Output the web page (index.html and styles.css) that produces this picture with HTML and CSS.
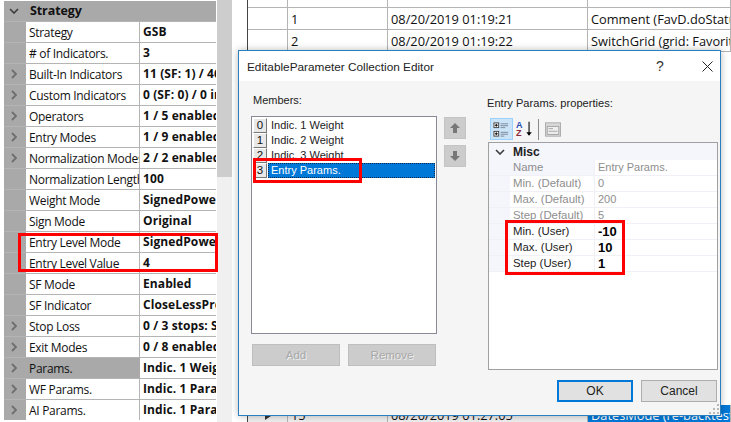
FILE: index.html
```html
<!DOCTYPE html>
<html lang="en">
<head>
<meta charset="utf-8">
<title>EditableParameter Collection Editor</title>
<link rel="stylesheet" href="styles.css">
</head>
<body>
<div class="desktop">
  <aside class="props">
    <div class="props-head"><span class="gutter"><svg class="chev" viewBox="0 0 10 6"><path d="M1 1l4 4 4-4"/></svg></span><b>Strategy</b></div>
    <div class="prow"><span class="gutter"></span><span class="pname">Strategy</span><span class="pval">GSB</span></div>
    <div class="prow"><span class="gutter"></span><span class="pname"># of Indicators.</span><span class="pval">3</span></div>
    <div class="prow"><span class="gutter"><svg class="arr" viewBox="0 0 6 10"><path d="M1 1l4 4-4 4"/></svg></span><span class="pname">Built-In Indicators</span><span class="pval">11 (SF: 1) / 46 indicators</span></div>
    <div class="prow"><span class="gutter"><svg class="arr" viewBox="0 0 6 10"><path d="M1 1l4 4-4 4"/></svg></span><span class="pname">Custom Indicators</span><span class="pval">0 (SF: 0) / 0 indicators</span></div>
    <div class="prow"><span class="gutter"><svg class="arr" viewBox="0 0 6 10"><path d="M1 1l4 4-4 4"/></svg></span><span class="pname">Operators</span><span class="pval">1 / 5 enabled</span></div>
    <div class="prow"><span class="gutter"><svg class="arr" viewBox="0 0 6 10"><path d="M1 1l4 4-4 4"/></svg></span><span class="pname">Entry Modes</span><span class="pval">1 / 9 enabled</span></div>
    <div class="prow"><span class="gutter"><svg class="arr" viewBox="0 0 6 10"><path d="M1 1l4 4-4 4"/></svg></span><span class="pname">Normalization Modes</span><span class="pval">2 / 2 enabled</span></div>
    <div class="prow"><span class="gutter"></span><span class="pname">Normalization Length</span><span class="pval">100</span></div>
    <div class="prow"><span class="gutter"></span><span class="pname">Weight Mode</span><span class="pval">SignedPower</span></div>
    <div class="prow"><span class="gutter"></span><span class="pname">Sign Mode</span><span class="pval">Original</span></div>
    <div class="prow"><span class="gutter"></span><span class="pname">Entry Level Mode</span><span class="pval">SignedPower</span></div>
    <div class="prow"><span class="gutter"></span><span class="pname">Entry Level Value</span><span class="pval">4</span></div>
    <div class="prow"><span class="gutter"></span><span class="pname">SF Mode</span><span class="pval">Enabled</span></div>
    <div class="prow"><span class="gutter"></span><span class="pname">SF Indicator</span><span class="pval">CloseLessPrevious</span></div>
    <div class="prow"><span class="gutter"><svg class="arr" viewBox="0 0 6 10"><path d="M1 1l4 4-4 4"/></svg></span><span class="pname">Stop Loss</span><span class="pval">0 / 3 stops: SL</span></div>
    <div class="prow"><span class="gutter"><svg class="arr" viewBox="0 0 6 10"><path d="M1 1l4 4-4 4"/></svg></span><span class="pname">Exit Modes</span><span class="pval">0 / 8 enabled</span></div>
    <div class="prow"><span class="gutter"><svg class="arr" viewBox="0 0 6 10"><path d="M1 1l4 4-4 4"/></svg></span><span class="pname sel">Params.</span><span class="pval">Indic. 1 Weight</span></div>
    <div class="prow"><span class="gutter"><svg class="arr" viewBox="0 0 6 10"><path d="M1 1l4 4-4 4"/></svg></span><span class="pname">WF Params.</span><span class="pval">Indic. 1 Param</span></div>
    <div class="prow"><span class="gutter"><svg class="arr" viewBox="0 0 6 10"><path d="M1 1l4 4-4 4"/></svg></span><span class="pname">AI Params.</span><span class="pval">Indic. 1 Param</span></div>
  </aside>
  <div class="scroll"><div class="thumb"></div></div>
  <main class="log">
    <div class="lrow top"><span></span><span></span><span></span><span></span></div>
    <div class="lrow"><span></span><span>1</span><span>08/20/2019 01:19:21</span><span>Comment (FavD.doStatus)</span></div>
    <div class="lrow"><span></span><span>2</span><span>08/20/2019 01:19:22</span><span>SwitchGrid (grid: Favorites)</span></div>
    <div class="lspacer"></div>
    <div class="lrow last"><span class="mark"><svg viewBox="0 0 6 8"><path d="M0 0l6 4-6 4z"/></svg></span><span>15</span><span>08/20/2019 01:27:05</span><span class="cur">DatesMode (re-backtest)</span></div>
  </main>

  <section class="dialog">
    <header class="dtitle">
      <span class="dname">EditableParameter Collection Editor</span>
      <span class="help">?</span>
      <svg class="close" viewBox="0 0 11 11"><path d="M.5.5l10 10M10.500.5l-10 10"/></svg>
    </header>
    <div class="dbody">
      <div class="cols">
        <div class="members">
          <div class="cap">Members:</div>
          <div class="mrow">
            <div class="listbox">
              <div class="item"><span class="num">0</span><span class="lbl">Indic. 1 Weight</span></div>
              <div class="item"><span class="num">1</span><span class="lbl">Indic. 2 Weight</span></div>
              <div class="item"><span class="num">2</span><span class="lbl">Indic. 3 Weight</span></div>
              <div class="item active"><span class="num">3</span><span class="lbl">Entry Params.</span></div>
            </div>
            <div class="updown">
              <div class="mv"><svg viewBox="0 0 10 10"><path d="M5 0l5 5H7v5H3V5H0z"/></svg></div>
              <div class="mv"><svg viewBox="0 0 10 10"><path d="M5 10l5-5H7V0H3v5H0z"/></svg></div>
            </div>
          </div>
          <div class="addrem"><div class="gbtn">Add</div><div class="gbtn">Remove</div></div>
        </div>
        <div class="pane">
          <div class="cap">Entry Params. properties:</div>
          <div class="tools">
            <span class="tool on"><svg viewBox="0 0 18 18"><rect x="1" y="2" width="5" height="5" fill="#fff" stroke="#444"/><path d="M2 4.500h3M3.500 3v3" stroke="#000"/><rect x="1" y="11" width="5" height="5" fill="#fff" stroke="#444"/><path d="M2 13.500h3M3.500 12v3" stroke="#000"/><path d="M8 3h8M8 5h8M8 7h5M8 12h8M8 14h8M8 16h4" stroke="#7a8a9a"/></svg></span>
            <span class="tool az"><svg viewBox="0 0 20 20"><text x="0" y="9" class="ta">A</text><text x="0" y="18" class="tz">Z</text><path d="M14.500 2v14" stroke="#000" stroke-width="1.200"/><path d="M11.500 13.500h6l-3 4z" fill="#000"/></svg></span>
            <span class="tsep"></span>
            <span class="tool pg"><svg viewBox="0 0 18 16"><rect x=".5" y=".5" width="17" height="15" fill="#d8d8d8" stroke="#a8a8a8"/><rect x="2.500" y="4.500" width="13" height="9" fill="#eee" stroke="#a0a0a0"/><path d="M4 7h5M4 10h10" stroke="#a0a0a0"/></svg></span>
          </div>
          <div class="grid">
            <div class="gcat"><svg class="chev" viewBox="0 0 10 6"><path d="M1 1l4 4 4-4"/></svg><b>Misc</b></div>
            <div class="grow dim first"><span class="gname">Name</span><span class="gval">Entry Params.</span></div>
            <div class="grow dim"><span class="gname">Min. (Default)</span><span class="gval">0</span></div>
            <div class="grow dim"><span class="gname">Max. (Default)</span><span class="gval">200</span></div>
            <div class="grow dim"><span class="gname">Step (Default)</span><span class="gval">5</span></div>
            <div class="grow"><span class="gname">Min. (User)</span><span class="gval strong">-10</span></div>
            <div class="grow"><span class="gname">Max. (User)</span><span class="gval strong">10</span></div>
            <div class="grow"><span class="gname">Step (User)</span><span class="gval strong">1</span></div>
          </div>
        </div>
      </div>
      <div class="actions"><div class="btn def">OK</div><div class="btn">Cancel</div></div>
      <svg class="grip" viewBox="0 0 10 11"><path d="M8 1h2v2H8zM4 5h2v2H4zM8 5h2v2H8zM0 9h2v2H0zM4 9h2v2H4zM8 9h2v2H8z"/></svg>
    </div>
  </section>

  <div class="mark-red m1"></div>
  <div class="mark-red m2"></div>
  <div class="mark-red m3"></div>
</div>
</body>
</html>
```

FILE: styles.css
```css
* { box-sizing: border-box; }
html, body { margin: 0; padding: 0; }
body { width: 731px; height: 422px; overflow: hidden; background: #fff; }
.desktop { position: relative; width: 731px; height: 422px; display: flex; overflow: hidden; color: #111; }

/* left property grid */
.props { width: 212px; margin: 1px 0 0 4px; font: 12px/20px "Open Sans", sans-serif; flex: none; letter-spacing: -.3px; }
.props-head { height: 20px; background: #a9a9a9; display: flex; align-items: center; font-size: 12.5px; letter-spacing: -.1px; }
.props-head .gutter { width: 26px; padding-right: 6px; background: none; }
.prow { height: 21px; display: flex; border-top: 1px solid #b4b4b4; }
.gutter { width: 22px; flex: none; background: #a9a9a9; display: flex; align-items: center; justify-content: center; padding-right: 2px; }
.pname { width: 114px; flex: none; padding: 1px 0 0 3px; background: #fff; overflow: hidden; white-space: nowrap; border-right: 1px solid #b4b4b4; }
.pname.sel { background: #a9a9a9; border-right: 0; }
.pval { flex: 1; min-width: 0; padding-left: 3px; font-weight: 700; overflow: hidden; white-space: nowrap; background: #fff; line-height: 20px; letter-spacing: .1px; }
.chev { width: 10px; height: 6px; fill: none; stroke: #3c3c3c; stroke-width: 1.600; }
.arr { width: 6px; height: 10px; fill: none; stroke: #6e6e6e; stroke-width: 1.800; }
.scroll { width: 15px; margin-left: 1px; background: #f0f0f0; flex: none; }
.thumb { height: 177px; background: #cdcdcd; }

/* background log grid */
.log { flex: 1; min-width: 0; margin-left: 15px; display: flex; flex-direction: column; border-left: 1px solid #444; font: 12.8px/22px "Open Sans", sans-serif; background: #fff; }
.lrow { display: grid; grid-template-columns: 40px 100px 200px 1fr; height: 22px; flex: none; border-bottom: 1px solid #b4b4b4; white-space: nowrap; overflow: hidden; }
.lrow.top { height: 8px; }
.lrow span { padding-left: 3px; border-right: 1px solid #b4b4b4; overflow: hidden; }
.lrow span:first-child { padding: 0; }
.lspacer { height: 353px; flex: none; }
.lrow.last { height: 21px; border: 0; background: #eee; line-height: 21px; }
.mark { display: flex; align-items: center; justify-content: center; }
.mark svg { width: 6px; height: 8px; fill: #333; }
.lrow .cur { background: #0078d7; color: #fff; }

/* dialog */
.dialog { position: absolute; left: 238px; top: 50px; width: 483px; height: 366px; border: 1px solid #2a7fc0; background: #f5f5f5; box-shadow: 0 0 7px rgba(0,0,0,.28); display: flex; flex-direction: column; font: 11px "Liberation Sans", sans-serif; color: #222; }
.dtitle { height: 30px; flex: none; background: #fff; display: flex; align-items: center; padding: 0 7px 0 8px; }
.dname { flex: 1; font-size: 11.800px; padding-top: 1px; }
.help { width: 12px; font-size: 14px; color: #333; margin-right: 34px; }
.close { width: 11px; height: 11px; stroke: #222; fill: none; }
.dbody { position: relative; flex: 1; display: flex; flex-direction: column; padding: 0 3px 13px 12px; }
.cols { flex: 1; display: flex; gap: 21px; min-height: 0; }
.members { width: 215px; flex: none; }
.cap { height: 15px; line-height: 15px; margin-top: 12px; white-space: nowrap; font-size: 11.100px; }
.members .cap { padding-left: 2px; font-size: 11px; }
.mrow { display: flex; gap: 7px; margin-top: 8px; }
.listbox { width: 186px; height: 218px; flex: none; background: #fff; border: 1px solid #8a8a96; padding: 1px; }
.item { display: flex; height: 15px; line-height: 15px; color: #222; font-size: 11px; }
.num { width: 14px; flex: none; margin-right: 1px; background: #e8e8e8; border: 1px solid; border-color: #fff #777 #777 #fff; text-align: center; line-height: 13px; color: #111; font-size: 11.500px; }
.lbl { flex: 1; padding-left: 3px; }
.item.active .lbl { background: #0078d7; color: #fff; outline: 1px dotted #0a2a50; outline-offset: -1px; }
.updown { display: flex; flex-direction: column; gap: 6px; margin-top: 1px; }
.mv { width: 22px; height: 22px; background: #ccc; border: 1px solid #c4c4c4; display: flex; align-items: center; justify-content: center; }
.mv svg { width: 10px; height: 10px; fill: #777; }
.addrem { display: flex; gap: 8px; margin: 10px 0 0 1px; }
.gbtn { width: 88px; height: 22px; background: #ccc; border: 1px solid #bfbfbf; text-align: center; line-height: 21px; color: #a8a8a8; text-shadow: 1px 1px 0 #eee; font-size: 11.500px; }
.pane { flex: 1; min-width: 0; }
.pane .cap { margin-top: 15px; }
.tools { display: flex; align-items: center; height: 22px; margin: 7px 0 2px 3px; }
.tool { height: 22px; display: flex; align-items: center; justify-content: center; }
.tool svg { display: block; }
.tool.on { width: 23px; background: #cce4f7; border: 1px solid #99d1ff; }
.tool.on svg { width: 17px; height: 17px; }
.tool.az { width: 21px; margin-left: 1px; }
.tool.az svg { width: 18px; height: 18px; }
.ta, .tz { font: 700 10px "Liberation Sans", sans-serif; }
.ta { fill: #2a4fb0; }
.tz { fill: #8c2a3a; }
.tsep { width: 1px; height: 21px; background: #8a8a8a; margin: 0 6px 0 3px; }
.tool.pg svg { width: 16px; height: 15px; }
.grid { width: 230px; height: 228px; margin-left: 1px; background: #fff; border: 1px solid #a0a0a0; }
.gcat { height: 17px; padding-left: 6px; display: flex; align-items: center; gap: 8px; background: #f5f5fc; font-size: 12px; }
.grow { height: 16px; display: flex; background: #f5f5fc; border-bottom: 1px solid #f0f0f6; line-height: 15px; padding-left: 21px; font-size: 11.400px; }
.gname { width: 85px; flex: none; background: #fff; padding-left: 3px; border-right: 1px solid #f0f0f6; white-space: nowrap; }
.gval { flex: 1; background: #fff; padding-left: 3px; font-size: 11px; }
.grow.first .gname { background: #f5f5fc; }
.dim { color: #8e8e8e; }
.grow .strong { font-weight: 700; color: #000; font-size: 13px; }
.actions { display: flex; justify-content: flex-end; gap: 8px; font-size: 12px; }
.btn { width: 76px; height: 22px; background: #e1e1e1; border: 1px solid #adadad; text-align: center; line-height: 20px; color: #222; }
.btn.def { border: 2px solid #0078d7; line-height: 18px; }
.grip { position: absolute; right: 1px; bottom: 1px; width: 10px; height: 11px; fill: #b8b8b8; }

/* red annotations */
.mark-red { position: absolute; border: 3px solid #f00; pointer-events: none; }
.m1 { left: 18px; top: 233px; width: 200px; height: 39px; }
.m2 { left: 253px; top: 158px; width: 109px; height: 25px; }
.m3 { left: 505px; top: 220px; width: 120px; height: 55px; }
```
